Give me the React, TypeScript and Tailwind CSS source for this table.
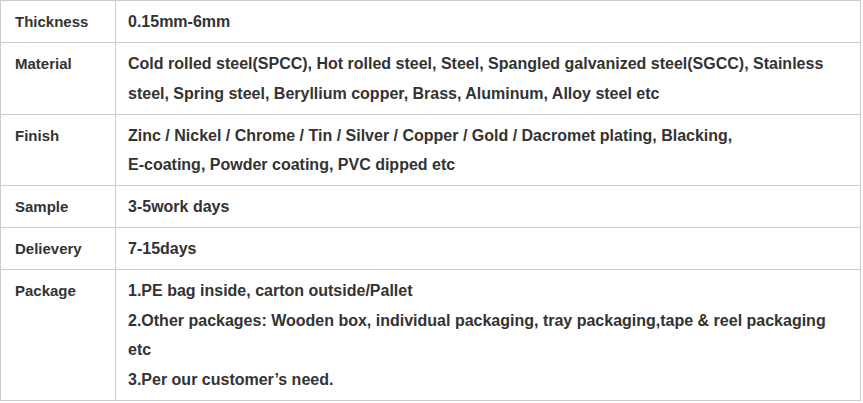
const rows: { label: string; lines: string[] }[] = [
  { label: "Thickness", lines: ["0.15mm-6mm"] },
  {
    label: "Material",
    lines: [
      "Cold rolled steel(SPCC), Hot rolled steel, Steel, Spangled galvanized steel(SGCC), Stainless",
      "steel, Spring steel, Beryllium copper, Brass, Aluminum, Alloy steel etc",
    ],
  },
  {
    label: "Finish",
    lines: [
      "Zinc / Nickel / Chrome / Tin / Silver / Copper / Gold / Dacromet plating, Blacking,",
      "E-coating, Powder coating, PVC dipped etc",
    ],
  },
  { label: "Sample", lines: ["3-5work days"] },
  { label: "Delievery", lines: ["7-15days"] },
  {
    label: "Package",
    lines: [
      "1.PE bag inside, carton outside/Pallet",
      "2.Other packages: Wooden box, individual packaging, tray packaging,tape & reel packaging",
      "etc",
      "3.Per our customer\u2019s need.",
    ],
  },
];

export default function App() {
  return (
    <div className="min-h-screen bg-white">
      <table
        className="w-[861px] border-collapse font-bold leading-[29.5px] text-[#333]"
        style={{ fontFamily: '"Liberation Sans", Arial, sans-serif' }}
      >
        <tbody>
          {rows.map((row) => (
            <tr key={row.label}>
              <td className="w-[115px] border border-[#cccccc] pt-[6px] pb-[5.5px] pl-[14px] align-top text-[15px]">
                {row.label}
              </td>
              <td className="border border-[#cccccc] pt-[6px] pb-[5.5px] pl-[12px] pr-[8px] align-top text-[16px]">
                {row.lines.map((line) => (
                  <div key={line} className="whitespace-nowrap">
                    {line}
                  </div>
                ))}
              </td>
            </tr>
          ))}
        </tbody>
      </table>
    </div>
  );
}
